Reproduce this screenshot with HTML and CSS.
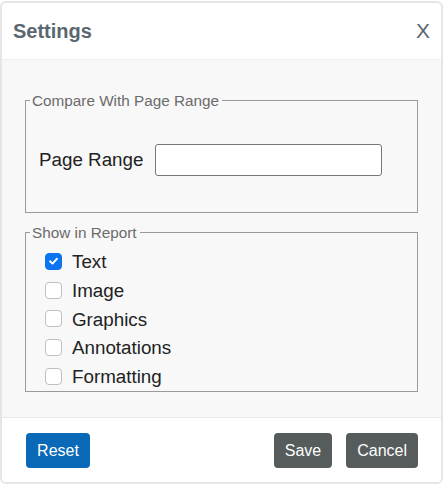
FILE: index.html
```html
<!DOCTYPE html>
<html>
<head>
<meta charset="utf-8">
<link rel="stylesheet" href="styles.css">
</head>
<body>
<div class="dialog">
  <div class="header">
    <span class="title">Settings</span>
    <span class="close">X</span>
  </div>
  <div class="content">
    <fieldset class="group range">
      <legend>Compare With Page Range</legend>
      <div class="range-row">
        <label class="range-label">Page Range</label>
        <input class="range-input" type="text">
      </div>
    </fieldset>
    <fieldset class="group report">
      <legend>Show in Report</legend>
      <div class="check-list">
        <div class="check-row"><span class="box checked"><svg viewBox="0 0 16 16" width="16" height="16"><path d="M4.3 8.3 L6.9 10.8 L11.7 5.6" fill="none" stroke="#fff" stroke-width="2" stroke-linecap="round" stroke-linejoin="round"/></svg></span><span class="check-label">Text</span></div>
        <div class="check-row"><span class="box"></span><span class="check-label">Image</span></div>
        <div class="check-row"><span class="box"></span><span class="check-label">Graphics</span></div>
        <div class="check-row"><span class="box"></span><span class="check-label">Annotations</span></div>
        <div class="check-row"><span class="box"></span><span class="check-label">Formatting</span></div>
      </div>
    </fieldset>
  </div>
  <div class="footer">
    <button class="btn btn-primary">Reset</button>
    <div class="spacer"></div>
    <button class="btn btn-dark">Save</button>
    <button class="btn btn-dark">Cancel</button>
  </div>
</div>
</body>
</html>
```
FILE: styles.css
```css
html, body {
  margin: 0;
  padding: 0;
  background: #ffffff;
}
body {
  font-family: "Liberation Sans", Arial, sans-serif;
  padding-top: 1px;
}
.dialog {
  box-sizing: border-box;
  width: 443px;
  height: 483px;
  border: 2px solid #e6e6e6;
  border-radius: 6px;
  display: flex;
  flex-direction: column;
  overflow: hidden;
  background: #fff;
}
.header {
  height: 56px;
  flex: 0 0 auto;
  display: flex;
  align-items: center;
  justify-content: space-between;
  padding: 0 11px 0 11px;
  border-bottom: 1px solid #efefef;
  color: #5b6770;
}
.title {
  font-size: 20px;
  font-weight: bold;
}
.close {
  font-size: 21px;
  font-weight: normal;
}
.content {
  flex: 1 1 auto;
  background: #f8f8f8;
  padding: 32px 23px 0 23px;
}
.group {
  margin: 0;
  border: 1px solid #9a9a9a;
  padding: 0;
  min-width: 0;
}
.group legend {
  font-size: 15.3px;
  line-height: 17px;
  color: #6b6b6b;
  padding: 0 3px 0 2px;
  margin-left: 4px;
}
.range-row {
  display: flex;
  align-items: center;
  gap: 12px;
  height: 32px;
  padding: 35px 13px 36px 13px;
}
.range-label {
  font-size: 18.8px;
  color: #222;
}
.range-input {
  box-sizing: border-box;
  width: 227px;
  height: 32px;
  border: 1px solid #767676;
  border-radius: 3px;
  background: #fff;
  margin: 0;
}
.report {
  margin-top: 11px;
}
.check-list {
  padding: 6px 13px 1px 19px;
}
.check-row {
  display: flex;
  align-items: center;
  height: 28.7px;
}
.box {
  box-sizing: border-box;
  width: 17px;
  height: 17px;
  border: 1px solid #bcc1c6;
  border-radius: 4px;
  background: #fff;
  margin-right: 10px;
  display: flex;
  align-items: center;
  justify-content: center;
}
.box.checked {
  background: #0b74f0;
  border-color: #0b74f0;
}
.check-label {
  font-size: 18.8px;
  color: #222;
  position: relative;
  top: 1px;
}
.footer {
  flex: 0 0 auto;
  display: flex;
  align-items: center;
  gap: 14px;
  padding: 15px 23px 14px 24px;
  border-top: 1px solid #e8e8e8;
  background: #fff;
}
.spacer {
  flex: 1 1 auto;
}
.btn {
  height: 35px;
  border: none;
  border-radius: 4px;
  font-family: "Liberation Sans", Arial, sans-serif;
  font-size: 16px;
  color: #fff;
  padding: 0 11px;
  margin: 0;
}
.btn-primary {
  background: #0a69b7;
  width: 64px;
}
.btn-dark {
  background: #565b5c;
}
```
